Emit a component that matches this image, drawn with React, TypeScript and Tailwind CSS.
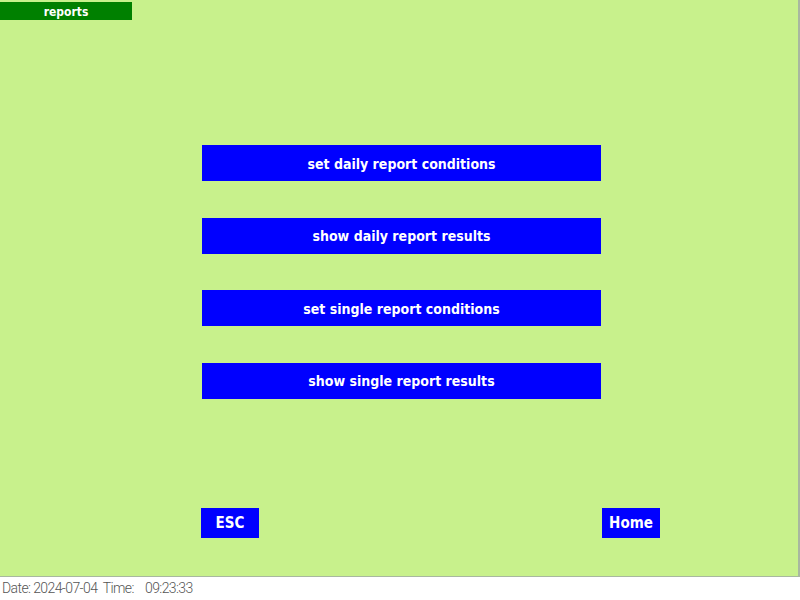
import React from "react";

const btn =
  "w-[399px] h-[36px] bg-[#0000ff] text-white flex items-center justify-center text-[14px] font-bold pt-[2px]";

export default function App() {
  return (
    <div className="w-[800px] h-[600px] bg-white flex flex-col overflow-hidden" style={{ fontFamily: '"DejaVu Sans Condensed", "DejaVu Sans", sans-serif' }}>
      <div className="h-[577px] w-[800px] bg-[#c8f18c] border-r-2 border-b border-[#a8b8a0] flex flex-col">
        <div className="mt-[2px] w-[132px] h-[18px] bg-[#008000] text-white text-[12px] font-bold flex items-center justify-center leading-none pt-[2px]">
          reports
        </div>
        <div className="flex flex-col gap-[36.6px] pl-[202px] mt-[125px]">
          <div className={btn}>set daily report conditions</div>
          <div className={btn}>show daily report results</div>
          <div className={btn}>set single report conditions</div>
          <div className={btn}>show single report results</div>
        </div>
        <div className="flex justify-between pl-[201px] pr-[138px] mt-[109px]">
          <div className="w-[58px] h-[30px] bg-[#0000ff] text-white flex items-center justify-center text-[15px] font-bold">ESC</div>
          <div className="w-[58px] h-[30px] bg-[#0000ff] text-white flex items-center justify-center text-[15px] font-bold">Home</div>
        </div>
      </div>
      <div className="pl-[2px] pt-[4px] text-[14px] text-[#555] leading-none tracking-[-0.6px]" style={{ fontFamily: 'Roboto, sans-serif', fontWeight: 300 }}>
        Date: 2024-07-04&nbsp; Time:&nbsp;&nbsp;&nbsp; 09:23:33
      </div>
    </div>
  );
}
